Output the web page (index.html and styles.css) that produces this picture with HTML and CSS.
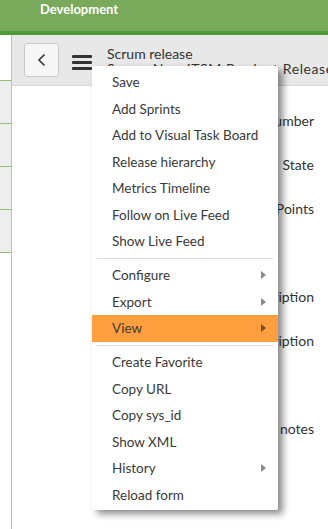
FILE: index.html
```html
<!DOCTYPE html>
<html lang="en">
<head>
    <meta charset="UTF-8">
    <meta name="viewport" content="width=device-width, initial-scale=1.0">
    <title>Scrum release</title>
    <link rel="stylesheet" href="styles.css">
</head>
<body>

    <!-- Instance banner -->
    <div class="banner">Development</div>

    <div class="main">
        <!-- Collapsed side navigation -->
        <div class="sidenav">
            <div class="nav-top"></div>
            <div class="nav-tab"></div>
            <div class="nav-tab"></div>
            <div class="nav-tab"></div>
            <div class="nav-tab"></div>
        </div>

        <div class="form-area">
            <div class="toolbar">
                <button class="back-btn" type="button">
                    <svg width="10" height="14" viewBox="0 0 10 14"><path d="M7.5 1.5 L2 7 L7.5 12.5" fill="none" stroke="#333" stroke-width="1.6"/></svg>
                </button>
                <div class="hamburger">
                    <span></span><span></span><span></span>
                </div>
                <div class="title">
                    <div class="title-main">Scrum release</div>
                    <div class="title-sub">Scrum Non-ITSM Product Release 1 [Scrum release]</div>
                </div>
            </div>

            <div class="fields">
                <div class="field">Number</div>
                <div class="field">State</div>
                <div class="field">Story Points</div>
                <div class="field"></div>
                <div class="field">Short description</div>
                <div class="field">Description</div>
                <div class="field"></div>
                <div class="field">Release notes</div>
            </div>
        </div>
    </div>

    <!-- Context menu -->
    <ul class="context-menu">
        <li>Save</li>
        <li>Add Sprints</li>
        <li>Add to Visual Task Board</li>
        <li>Release hierarchy</li>
        <li>Metrics Timeline</li>
        <li>Follow on Live Feed</li>
        <li>Show Live Feed</li>
        <li class="sep"></li>
        <li class="sub">Configure</li>
        <li class="sub">Export</li>
        <li class="sub active">View</li>
        <li class="sep"></li>
        <li>Create Favorite</li>
        <li>Copy URL</li>
        <li>Copy sys_id</li>
        <li>Show XML</li>
        <li class="sub">History</li>
        <li>Reload form</li>
    </ul>

</body>
</html>
```

FILE: styles.css
```css
/* Reset */
body, ul {
    margin: 0;
    padding: 0;
}

body {
    font-family: 'Lato', 'Liberation Sans', sans-serif;
    font-size: 14px;
    color: #333;
    background: #fff;
    height: 529px;
    overflow: hidden;
}

/* Banner */
.banner {
    height: 31px;
    background: #79a95b;
    border-bottom: 4px solid #4f9b3a;
    color: #fff;
    font-weight: bold;
    font-size: 13px;
    line-height: 19px;
    padding-left: 40px;
}

.main {
    display: flex;
    height: 494px;
}

/* Side nav */
.sidenav {
    width: 11px;
    border-right: 1px solid #bdbdbd;
    display: flex;
    flex-direction: column;
}

.nav-top {
    height: 45px;
    border-bottom: 1px solid #8cc06a;
}

.nav-tab {
    height: 42px;
    background: #eeeeee;
    border-bottom: 1px solid #8cc06a;
}

/* Form */
.form-area {
    flex: 1;
    min-width: 0;
}

.toolbar {
    height: 50px;
    background: #e8e8e8;
    border-bottom: 1px solid #d6d6d6;
    display: flex;
    align-items: center;
    padding-left: 12px;
    overflow: hidden;
}

.back-btn {
    width: 35px;
    height: 34px;
    background: #f7f7f7;
    border: 1px solid #c9c9c9;
    border-radius: 3px;
    display: flex;
    align-items: center;
    justify-content: center;
    padding: 0;
    flex-shrink: 0;
}

.hamburger {
    width: 20px;
    margin-left: 13px;
    display: flex;
    flex-direction: column;
    gap: 3px;
    margin-top: 5px;
    flex-shrink: 0;
}

.hamburger span {
    display: block;
    height: 3px;
    background: #333;
    border-radius: 1px;
}

.title {
    margin-left: 15px;
    white-space: nowrap;
    line-height: 15px;
    margin-top: 2px;
}

.title-main {
    font-size: 14px;
}

.title-sub {
    font-size: 14px;
    letter-spacing: 0.6px;
}

.fields {
    padding-top: 13px;
}

.field {
    height: 44px;
    line-height: 44px;
    text-align: right;
    padding-right: 14px;
    font-size: 14px;
    color: #333;
}

/* Context menu */
.context-menu {
    position: absolute;
    left: 92px;
    top: 66px;
    width: 186px;
    list-style: none;
    background: #fff;
    padding: 3px 0 2px;
    box-shadow: 5px 4px 7px rgba(0, 0, 0, 0.45);
    border-radius: 2px;
}

.context-menu li {
    height: 26.5px;
    line-height: 26.5px;
    padding-left: 20px;
    font-size: 13.5px;
    color: #3a3a3a;
    position: relative;
}

.context-menu li.sep {
    height: 0;
    border-top: 1px solid #dcdcdc;
    margin: 3px 5px 3.5px;
    padding: 0;
}

.context-menu li.sub::after {
    content: "";
    position: absolute;
    right: 12px;
    top: 9px;
    border-left: 5px solid #8a8a8a;
    border-top: 4.5px solid transparent;
    border-bottom: 4.5px solid transparent;
}

.context-menu li.active {
    background: #ff9f3e;
}

.context-menu li.active::after {
    border-left-color: #7a4a1e;
}
```
